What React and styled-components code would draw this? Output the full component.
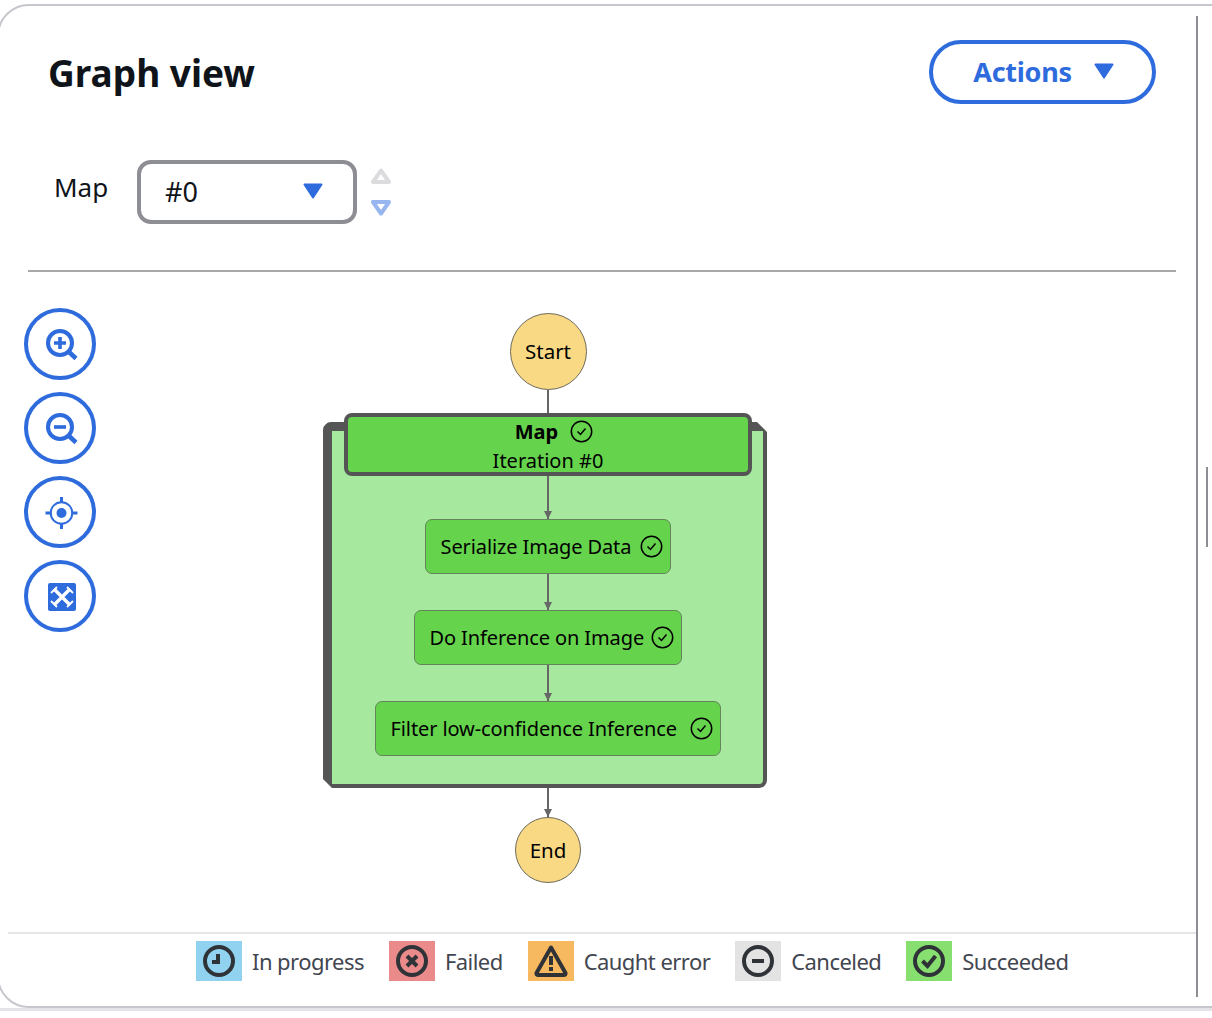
import React from 'react';
import styled, { createGlobalStyle } from 'styled-components';

const FONT = '"Noto Sans", "Open Sans", Arial, sans-serif';
const BLUE = '#2e6bdc';

const Global = createGlobalStyle`
  html, body { margin: 0; padding: 0; background: #fff; }
  body { width: 1212px; height: 1018px; overflow: hidden; font-family: ${FONT}; color: #0f141a; }
`;

const Page = styled.div`
  position: relative;
  width: 1212px;
  height: 1018px;
  overflow: hidden;
`;

const Card = styled.div`
  box-sizing: border-box;
  display: flex;
  width: 1300px;
  height: 1004px;
  margin: 4px 0 0 -3px;
  border: 2px solid #c6c6cd;
  border-radius: 32px;
`;

const UnderLine = styled.div`
  height: 3px;
  background: #e4e4e8;
`;

const Main = styled.div`
  width: 1197px;
  flex: none;
  display: flex;
  flex-direction: column;
`;

const Divider = styled.div`
  width: 2px;
  flex: none;
  margin: 10px 0 9px;
  background: #8d8d94;
`;

const Scrollbar = styled.div`
  width: 2px;
  height: 80px;
  flex: none;
  margin: 461px 0 0 8px;
  background: #8d8d94;
`;

const Header = styled.div`
  display: flex;
  align-items: center;
  justify-content: space-between;
  height: 64px;
  margin-top: 34px;
  padding: 0 40px 0 49px;
`;

const Title = styled.h2`
  margin: 0;
  font-size: 37px;
  font-weight: 700;
  color: #0f141a;
`;

const ActionsButton = styled.button`
  box-sizing: border-box;
  display: flex;
  align-items: center;
  justify-content: center;
  gap: 22px;
  width: 227px;
  height: 64px;
  background: #fff;
  border: 4px solid ${BLUE};
  border-radius: 32px;
  color: ${BLUE};
  font-family: ${FONT};
  font-size: 27px;
  font-weight: 700;
  letter-spacing: -0.3px;
  padding: 0 0 2px 2px;
`;

const SelectRow = styled.div`
  display: flex;
  align-items: center;
  height: 64px;
  margin-top: 56px;
  padding-left: 55px;
`;

const SelectLabel = styled.div`
  width: 83px;
  font-size: 26px;
  margin-top: -10px;
`;

const Select = styled.div`
  box-sizing: border-box;
  display: flex;
  align-items: center;
  justify-content: space-between;
  width: 220px;
  height: 64px;
  padding: 0 30px 2px 24px;
  border: 4px solid #8d8d94;
  border-radius: 14px;
  font-size: 27px;
`;

const Stepper = styled.div`
  display: flex;
  flex-direction: column;
  gap: 16px;
  margin-left: 14px;
`;

const Rule = styled.hr`
  width: 1148px;
  height: 2px;
  margin: 46px 0 0 29px;
  border: 0;
  background: #a8a8a8;
`;

const Body = styled.div`
  flex: 1;
  display: flex;
`;

const Tools = styled.div`
  width: 72px;
  flex: none;
  margin: 36px 0 0 25px;
  display: flex;
  flex-direction: column;
  gap: 12px;
`;

const ToolButton = styled.button`
  box-sizing: border-box;
  width: 72px;
  height: 72px;
  padding: 0;
  display: flex;
  align-items: center;
  justify-content: center;
  background: #fff;
  border: 4px solid ${BLUE};
  border-radius: 50%;
`;

const Graph = styled.div`
  width: 906px;
  flex: none;
  margin-left: -1px;
  padding-top: 41px;
  display: flex;
  flex-direction: column;
  align-items: center;
`;

const Terminal = styled.div`
  box-sizing: border-box;
  flex: none;
  display: flex;
  align-items: center;
  justify-content: center;
  width: ${(p) => p.$size}px;
  height: ${(p) => p.$size}px;
  padding-bottom: ${(p) => p.$lift || 0}px;
  background: #fad985;
  border: 1px solid #6e6a58;
  border-radius: 50%;
  font-size: 20.5px;
  color: #000;
`;

const Edge = styled.div`
  position: relative;
  flex: none;
  width: 2px;
  height: ${(p) => p.$h}px;
  background: #666;
  ${(p) =>
    p.$arrow &&
    `&::after {
      content: '';
      position: absolute;
      left: -3px;
      bottom: 0;
      border-left: 4px solid transparent;
      border-right: 4px solid transparent;
      border-top: 8px solid #666;
    }`}
`;

// the dark frame sits on its own layer so its corners can be cut
const MapGroup = styled.div`
  position: relative;
  box-sizing: border-box;
  flex: none;
  width: 444px;
  height: 366px;
  margin: 6px 0 0 -6px;
  padding: 9px 4px 4px 9px;
  display: flex;
  flex-direction: column;
  align-items: center;

  &::before {
    content: '';
    position: absolute;
    inset: 0;
    box-sizing: border-box;
    background: #a6e89e;
    border-style: solid;
    border-color: #555;
    border-width: 9px 4px 4px 9px;
    border-radius: 8px;
    clip-path: polygon(
      5px 0,
      calc(100% - 10px) 0,
      100% 10px,
      100% 100%,
      9px 100%,
      0 calc(100% - 9px),
      0 5px
    );
  }
`;

const MapHeader = styled.div`
  position: absolute;
  top: -9px;
  left: 21px;
  box-sizing: border-box;
  width: 408px;
  height: 63px;
  display: flex;
  flex-direction: column;
  align-items: center;
  background: #66d34d;
  border: 4px solid #555;
  border-radius: 8px;
  font-size: 20px;
  color: #000;
  line-height: 29px;
`;

const MapTitle = styled.div`
  display: flex;
  align-items: center;
  gap: 12px;
  margin-left: 12px;
  font-weight: 700;
`;

const StepStack = styled.div`
  position: relative;
  margin-top: 45px;
  display: flex;
  flex-direction: column;
  align-items: center;
`;

const Step = styled.div`
  box-sizing: border-box;
  flex: none;
  display: flex;
  align-items: center;
  justify-content: space-between;
  width: ${(p) => p.$w}px;
  height: 55px;
  padding: 0 7px 0 15px;
  background: #66d34d;
  border: 1px solid #64845c;
  border-radius: 7px;
  font-size: 20px;
  letter-spacing: -0.1px;
  color: #000;
`;

const Legend = styled.div`
  box-sizing: border-box;
  height: 74px;
  margin-left: 9px;
  border-top: 2px solid #e6e6e8;
  padding: 7px 0 0 188px;
  display: flex;
  align-items: flex-start;
`;

const LegendItem = styled.div`
  display: flex;
  align-items: center;
  margin-right: 25px;
  font-size: 22px;
  letter-spacing: -0.55px;
  color: #424650;
`;

const Swatch = styled.div`
  width: 46px;
  height: 40px;
  margin-right: 10px;
  display: flex;
  align-items: center;
  justify-content: center;
  background: ${(p) => p.$color};
`;

const Caret = ({ color = BLUE, w = 20, h = 16 }) => (
  <svg width={w} height={h} viewBox="0 0 20 16">
    <path d="M1.5 1.5h17L10 14.5z" fill={color} stroke={color} strokeWidth="2" strokeLinejoin="round" />
  </svg>
);

const StepArrow = ({ up, color }) => (
  <svg width="20" height="16" viewBox="0 0 20 16">
    <path
      d={up ? 'M10 2.5L18 14H2z' : 'M2 2h16l-8 11.5z'}
      fill="none"
      stroke={color}
      strokeWidth="4"
      strokeLinejoin="round"
    />
  </svg>
);

const CheckCircle = () => (
  <svg width="23" height="23" viewBox="0 0 23 23" fill="none" stroke="#000">
    <circle cx="11.5" cy="11.5" r="10.2" strokeWidth="1.5" />
    <path d="M7.5 11.5l3 3 5-6" strokeWidth="1.5" />
  </svg>
);

const ZoomIcon = ({ plus }) => (
  <svg width="36" height="36" viewBox="0 0 36 36" fill="none" stroke={BLUE}>
    <circle cx="18" cy="17" r="12" strokeWidth="4" />
    <path d="M27 26l7 6.5" strokeWidth="4.5" />
    <path d={plus ? 'M12 17h12M18 11v12' : 'M12 17h12'} strokeWidth="3.6" />
  </svg>
);

const TargetIcon = () => (
  <svg width="36" height="36" viewBox="0 0 36 36" fill="none" stroke={BLUE}>
    <circle cx="19.5" cy="19" r="10.8" strokeWidth="2" />
    <circle cx="19.5" cy="19" r="5" fill={BLUE} stroke="none" />
    <path d="M3.5 19h6M29.5 19h6M19.5 3v6M19.5 29v6" strokeWidth="3" />
  </svg>
);

const FitIcon = () => (
  <svg width="34" height="34" viewBox="0 0 34 34">
    <rect x="5" y="4" width="28" height="28" rx="2" fill={BLUE} />
    <path d="M11 10l16 16M27 10L11 26" stroke="#fff" strokeWidth="3.4" />
    <path
      d="M14 8l-6 6M24 8l6 6M14 28l-6-6M24 28l6-6"
      stroke="#fff"
      strokeWidth="1.8"
    />
  </svg>
);

const LegendIcon = ({ kind }) => (
  <svg width="34" height="34" viewBox="0 0 34 34" fill="none" stroke="#2f3337" strokeWidth="4">
    {kind === 'warn' ? (
      <path d="M17 3.5L31.5 29a1.5 1.5 0 0 1-1.3 2H3.8a1.5 1.5 0 0 1-1.3-2z" strokeLinejoin="round" />
    ) : (
      <circle cx="17" cy="17" r="14" />
    )}
    {kind === 'clock' && <path d="M16 10v8h-6" />}
    {kind === 'x' && <path d="M12 12l10 10M22 12L12 22" />}
    {kind === 'warn' && <path d="M17 12v9M17 23v4" />}
    {kind === 'minus' && <path d="M11 17h12" />}
    {kind === 'check' && <path d="M10.5 17l5 5 8-10" />}
  </svg>
);

const legend = [
  { label: 'In progress', color: '#91d2f0', kind: 'clock' },
  { label: 'Failed', color: '#ea8a8a', kind: 'x' },
  { label: 'Caught error', color: '#f6b960', kind: 'warn' },
  { label: 'Canceled', color: '#e3e3e3', kind: 'minus' },
  { label: 'Succeeded', color: '#87df70', kind: 'check' },
];

export default function App() {
  return (
    <Page>
      <Global />
      <Card>
        <Main>
          <Header>
            <Title>Graph view</Title>
            <ActionsButton>
              Actions
              <Caret />
            </ActionsButton>
          </Header>
          <SelectRow>
            <SelectLabel>Map</SelectLabel>
            <Select>
              #0
              <Caret />
            </Select>
            <Stepper>
              <StepArrow up color="#dcdcdf" />
              <StepArrow color="#97b5ee" />
            </Stepper>
          </SelectRow>
          <Rule />
          <Body>
            <Tools>
              <ToolButton><ZoomIcon plus /></ToolButton>
              <ToolButton><ZoomIcon /></ToolButton>
              <ToolButton><TargetIcon /></ToolButton>
              <ToolButton><FitIcon /></ToolButton>
            </Tools>
            <Graph>
              <Terminal $size={77} $lift={2}>Start</Terminal>
              <Edge $h={26} />
              <MapGroup>
                <MapHeader>
                  <MapTitle>
                    Map
                    <CheckCircle />
                  </MapTitle>
                  <div>Iteration #0</div>
                </MapHeader>
                <StepStack>
                  <Edge $h={43} $arrow />
                  <Step $w={246}>Serialize Image Data <CheckCircle /></Step>
                  <Edge $h={36} $arrow />
                  <Step $w={268}>Do Inference on Image <CheckCircle /></Step>
                  <Edge $h={36} $arrow />
                  <Step $w={346}>Filter low-confidence Inference <CheckCircle /></Step>
                </StepStack>
              </MapGroup>
              <Edge $h={29} $arrow />
              <Terminal $size={66}>End</Terminal>
            </Graph>
          </Body>
          <Legend>
            {legend.map((item) => (
              <LegendItem key={item.label}>
                <Swatch $color={item.color}><LegendIcon kind={item.kind} /></Swatch>
                {item.label}
              </LegendItem>
            ))}
          </Legend>
        </Main>
        <Divider />
        <Scrollbar />
      </Card>
      <UnderLine />
    </Page>
  );
}
